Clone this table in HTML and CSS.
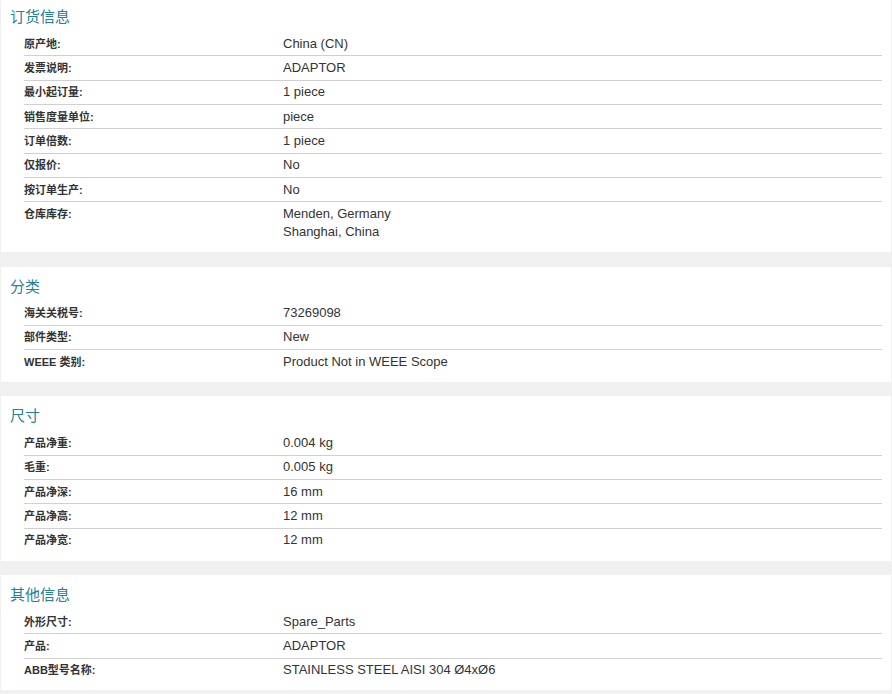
FILE: index.html
```html
<!DOCTYPE html>
<html lang="zh-CN">
<head>
<meta charset="utf-8">
<title>产品信息</title>
<link rel="stylesheet" href="styles.css">
</head>
<body>
<div class="page">
  <section class="card first">
    <h2 class="card-title">订货信息</h2>
    <div class="rows">
      <div class="row"><div class="label">原产地:</div><div class="value">China (CN)</div></div>
      <div class="row"><div class="label">发票说明:</div><div class="value">ADAPTOR</div></div>
      <div class="row"><div class="label">最小起订量:</div><div class="value">1 piece</div></div>
      <div class="row"><div class="label">销售度量单位:</div><div class="value">piece</div></div>
      <div class="row"><div class="label">订单倍数:</div><div class="value">1 piece</div></div>
      <div class="row"><div class="label">仅报价:</div><div class="value">No</div></div>
      <div class="row"><div class="label">按订单生产:</div><div class="value">No</div></div>
      <div class="row"><div class="label">仓库库存:</div><div class="value">Menden, Germany<br>Shanghai, China</div></div>
    </div>
  </section>
  <section class="card">
    <h2 class="card-title">分类</h2>
    <div class="rows">
      <div class="row"><div class="label">海关关税号:</div><div class="value">73269098</div></div>
      <div class="row"><div class="label">部件类型:</div><div class="value">New</div></div>
      <div class="row"><div class="label">WEEE 类别:</div><div class="value">Product Not in WEEE Scope</div></div>
    </div>
  </section>
  <section class="card">
    <h2 class="card-title">尺寸</h2>
    <div class="rows">
      <div class="row"><div class="label">产品净重:</div><div class="value">0.004 kg</div></div>
      <div class="row"><div class="label">毛重:</div><div class="value">0.005 kg</div></div>
      <div class="row"><div class="label">产品净深:</div><div class="value">16 mm</div></div>
      <div class="row"><div class="label">产品净高:</div><div class="value">12 mm</div></div>
      <div class="row"><div class="label">产品净宽:</div><div class="value">12 mm</div></div>
    </div>
  </section>
  <section class="card">
    <h2 class="card-title">其他信息</h2>
    <div class="rows">
      <div class="row"><div class="label">外形尺寸:</div><div class="value">Spare_Parts</div></div>
      <div class="row"><div class="label">产品:</div><div class="value">ADAPTOR</div></div>
      <div class="row"><div class="label">ABB型号名称:</div><div class="value">STAINLESS STEEL AISI 304 Ø4xØ6</div></div>
    </div>
  </section>
</div>
</body>
</html>
```
FILE: styles.css
```css
html, body {
  margin: 0;
  padding: 0;
  background: #f0f0f0;
}
body {
  font-family: "Liberation Sans", Arial, "Noto Sans CJK SC", sans-serif;
  color: #333;
  overflow: hidden;
}
.page {
  padding: 0 1px;
}
.card {
  background: #fff;
  padding: 9px 9px 8.5px 9px;
  margin-bottom: 14.5px;
}
.card.first {
  margin-top: -3px;
}
.card-title {
  margin: 0 0 6px 0;
  font-family: "Noto Sans CJK SC", "Liberation Sans", sans-serif;
  font-weight: normal;
  font-size: 15px;
  line-height: 20px;
  color: #23819a;
}
.rows {
  margin-left: 14px;
}
.row {
  display: flex;
  padding: 2.67px 0;
  border-bottom: 1px solid #d0d0d0;
  line-height: 18px;
}
.row:last-child {
  border-bottom: none;
}
.label {
  width: 259px;
  flex: none;
  font-family: "Liberation Sans", Arial, "Noto Sans CJK SC", sans-serif;
  font-weight: bold;
  font-size: 11px;
  color: #333;
}
.value {
  font-size: 13px;
  color: #333;
}
```
